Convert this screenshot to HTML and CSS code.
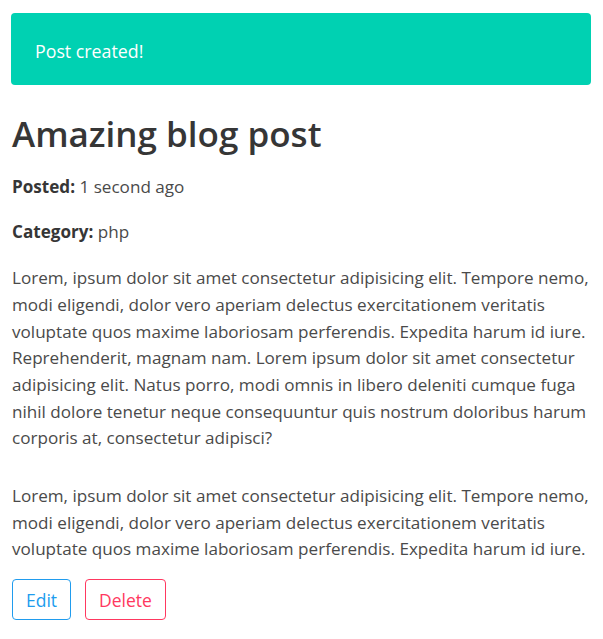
FILE: index.html
```html
<!DOCTYPE html>
<html>
<head>
<meta charset="utf-8">
<link rel="stylesheet" href="styles.css">
</head>
<body>
<div class="page">
  <div class="notification">Post created!</div>
  <h1 class="title">Amazing blog post</h1>
  <p class="meta"><strong>Posted:</strong> 1 second ago</p>
  <p class="meta"><strong>Category:</strong> php</p>
  <div class="content">
    <p>Lorem, ipsum dolor sit amet consectetur adipisicing elit. Tempore nemo, modi eligendi, dolor vero aperiam delectus exercitationem veritatis voluptate quos maxime laboriosam perferendis. Expedita harum id iure. Reprehenderit, magnam nam. Lorem ipsum dolor sit amet consectetur adipisicing elit. Natus porro, modi omnis in libero deleniti cumque fuga nihil dolore tenetur neque consequuntur quis nostrum doloribus harum corporis at, consectetur adipisci?</p>
    <p>Lorem, ipsum dolor sit amet consectetur adipisicing elit. Tempore nemo, modi eligendi, dolor vero aperiam delectus exercitationem veritatis voluptate quos maxime laboriosam perferendis. Expedita harum id iure.</p>
  </div>
  <div class="buttons">
    <a class="button is-info">Edit</a>
    <a class="button is-danger">Delete</a>
  </div>
</div>
</body>
</html>
```

FILE: styles.css
```css
html, body {
  margin: 0;
  padding: 0;
  background: #fff;
}
body {
  font-family: "Open Sans", "Noto Sans", sans-serif;
  font-size: 17.1px;
  line-height: 26.67px;
  color: #4a4a4a;
}
.page {
  padding: 13px 12px 0 11px;
}
.notification {
  background: #00d1b2;
  color: #fff;
  border-radius: 4px;
  padding: 25px 24px 21px 24px;
  height: 26px;
  font-size: 17.8px;
}
.title {
  margin: 27px 0 0 1px;
  font-size: 35px;
  line-height: 44px;
  font-weight: 600;
  color: #363636;
}
.meta {
  margin: 18px 0 0 1px;
}
.meta strong {
  font-weight: 700;
  color: #363636;
}
.content {
  margin: 20px 0 0 1px;
}
.content p {
  margin: 0 0 31px 0;
}
.content p:last-child {
  margin-bottom: 0;
}
.buttons {
  display: flex;
  gap: 14px;
  margin: 16px 0 0 1px;
}
.button {
  display: inline-flex;
  align-items: center;
  justify-content: center;
  height: 41px;
  box-sizing: border-box;
  padding: 2px 13px 0;
  border: 1px solid;
  border-radius: 4px;
  background: #fff;
  font-size: 17.5px;
  cursor: pointer;
}
.is-info {
  color: #209cee;
  border-color: #209cee;
}
.is-danger {
  color: #ff3860;
  border-color: #ff3860;
}
```
